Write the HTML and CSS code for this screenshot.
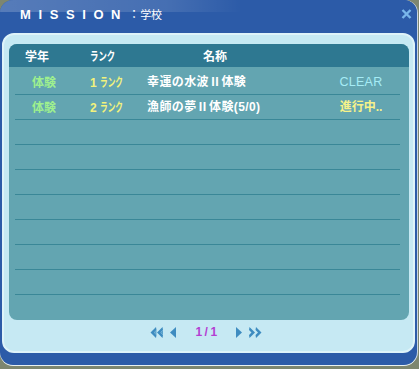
FILE: index.html
```html
<!DOCTYPE html>
<html lang="ja">
<head>
<meta charset="utf-8">
<title>MISSION</title>
<link rel="stylesheet" href="styles.css">
</head>
<body>
<div class="window">
  <div class="titlebar">
    <span class="title"><span class="title-en">MISSION</span><span class="title-colon">：</span><span class="title-jp">学校</span></span>
    <span class="close">
      <svg width="11" height="10" viewBox="0 0 11 10"><path d="M1.5 1 L9.5 9 M9.5 1 L1.5 9" stroke="#78b6ea" stroke-width="2.4" fill="none"/></svg>
    </span>
  </div>
  <div class="panel">
    <div class="table">
      <div class="head">
        <span class="h-grade">学年</span>
        <span class="h-rank"><span class="narrow">ランク</span></span>
        <span class="h-name">名称</span>
      </div>
      <div class="rows">
        <div class="row">
          <span class="c-grade">体験</span>
          <span class="c-rank">1 <span class="narrow">ランク</span></span>
          <span class="c-name">幸運の水波Ⅱ体験</span>
          <span class="c-status clear">CLEAR</span>
        </div>
        <div class="row">
          <span class="c-grade">体験</span>
          <span class="c-rank">2 <span class="narrow">ランク</span></span>
          <span class="c-name">漁師の夢Ⅱ体験(5/0)</span>
          <span class="c-status progress">進行中..</span>
        </div>
        <div class="row"></div>
        <div class="row"></div>
        <div class="row"></div>
        <div class="row"></div>
        <div class="row"></div>
        <div class="row"></div>
        <div class="row"></div>
        <div class="row last"></div>
      </div>
    </div>
    <div class="pager">
      <svg class="arrow dbl" width="13" height="11" viewBox="0 0 13 11"><path d="M6 0 L0.5 5.5 L6 11 L6.5 8 L4 5.5 L6.5 3 Z M12.5 0 L7 5.5 L12.5 11 L13 8 L10.5 5.5 L13 3 Z" fill="#3e8cc0"/><path d="M6.5 3 L4 5.5 L6.5 8 Z M13 3 L10.5 5.5 L13 8 Z" fill="#5aa2cc"/></svg>
      <svg class="arrow single" width="8" height="11" viewBox="0 0 8 11"><path d="M7 0 L1 5.5 L7 11 Z" fill="#3e8cc0"/></svg>
      <span class="page">1/1</span>
      <svg class="arrow single" width="8" height="11" viewBox="0 0 8 11"><path d="M1 0 L7 5.5 L1 11 Z" fill="#3e8cc0"/></svg>
      <svg class="arrow dbl" width="13" height="11" viewBox="0 0 13 11"><path d="M7 0 L12.5 5.5 L7 11 L6.5 8 L9 5.5 L6.5 3 Z M0.5 0 L6 5.5 L0.5 11 L0 8 L2.5 5.5 L0 3 Z" fill="#3e8cc0"/></svg>
    </div>
  </div>
</div>
</body>
</html>
```

FILE: styles.css
```css
html, body {
  margin: 0;
  padding: 0;
}
body {
  background: #7d8670;
  width: 419px;
  height: 369px;
  overflow: hidden;
  font-family: "Liberation Sans", "Noto Sans CJK JP", sans-serif;
}
.window {
  box-sizing: border-box;
  width: 417px;
  height: 365px;
  background: #2c5ba8;
  border-radius: 13px;
  box-shadow: 0 1px 0 #e8f0f2, 1px 0 0 #c8d4e0;
  display: flex;
  flex-direction: column;
  overflow: hidden;
}
.titlebar {
  height: 33px;
  flex: none;
  display: flex;
  align-items: center;
  padding: 0 5px 6px 20px;
  box-sizing: border-box;
  background:
    linear-gradient(to right, rgba(255,255,255,0.2) 0, rgba(255,255,255,0.12) 40%, rgba(255,255,255,0) 58%) no-repeat 0 0 / 100% 12px,
    #2c5ba8;
}
.title {
  color: #ffffff;
  display: flex;
  align-items: baseline;
}
.title-en {
  font-size: 13px;
  font-weight: bold;
  letter-spacing: 7.6px;
}
.title-colon {
  font-size: 12px;
  font-family: "Noto Sans CJK JP", sans-serif;
}
.title-jp {
  font-size: 11px;
  font-family: "Noto Sans CJK JP", sans-serif;
}
.close {
  margin-left: auto;
  display: flex;
}
.panel {
  box-sizing: border-box;
  margin: 0 2px;
  height: 320px;
  background: #c6e9f3;
  border: 2px solid #def3f9;
  border-radius: 12px;
  padding: 9px 4px 0 5px;
  display: flex;
  flex-direction: column;
}
.table {
  width: 400px;
  height: 276px;
  background: #63a5b1;
  border-radius: 8px;
  overflow: hidden;
  font-size: 12px;
  font-weight: bold;
}
.head {
  height: 23px;
  background: #2e7891;
  display: grid;
  grid-template-columns: 65px 113px auto;
  align-items: center;
  padding-left: 16px;
  color: #ffffff;
  font-family: "Noto Sans CJK JP", sans-serif;
}
.h-rank .narrow {
  transform: scaleX(0.7);
}
.narrow {
  display: inline-block;
  transform: scaleX(0.64);
  transform-origin: 0 50%;
  font-family: "Noto Sans CJK JP", sans-serif;
}
.rows {
  padding-top: 3px;
}
.row {
  box-sizing: border-box;
  height: 25px;
  margin: 0 9px 0 6px;
  border-bottom: 1px solid #3a8797;
  display: grid;
  grid-template-columns: 58px 57px 174px 80px;
  align-items: center;
  padding-left: 17px;
  line-height: 1;
}
.row.last {
  border-bottom: none;
}
.c-grade {
  color: #9ef08e;
  font-family: "Noto Sans CJK JP", sans-serif;
}
.c-rank {
  color: #f2f27c;
  white-space: nowrap;
}
.c-name {
  color: #ffffff;
  white-space: nowrap;
  letter-spacing: 0.4px;
}
.c-status {
  text-align: center;
  white-space: nowrap;
}
.clear {
  color: #a6ecf6;
  font-weight: normal;
  font-size: 12.5px;
  letter-spacing: 0.3px;
}
.progress {
  color: #f6f28a;
}
.pager {
  height: 24px;
  display: flex;
  align-items: center;
  justify-content: center;
  padding-right: 6px;
}
.arrow {
  display: block;
}
.arrow.dbl + .arrow.single {
  margin-left: 6px;
}
.arrow.single + .arrow.dbl {
  margin-left: 6px;
}
.page {
  color: #b43ed2;
  font-size: 12px;
  font-weight: bold;
  letter-spacing: 2.5px;
  margin: 0 15px 0 18px;
}
```
